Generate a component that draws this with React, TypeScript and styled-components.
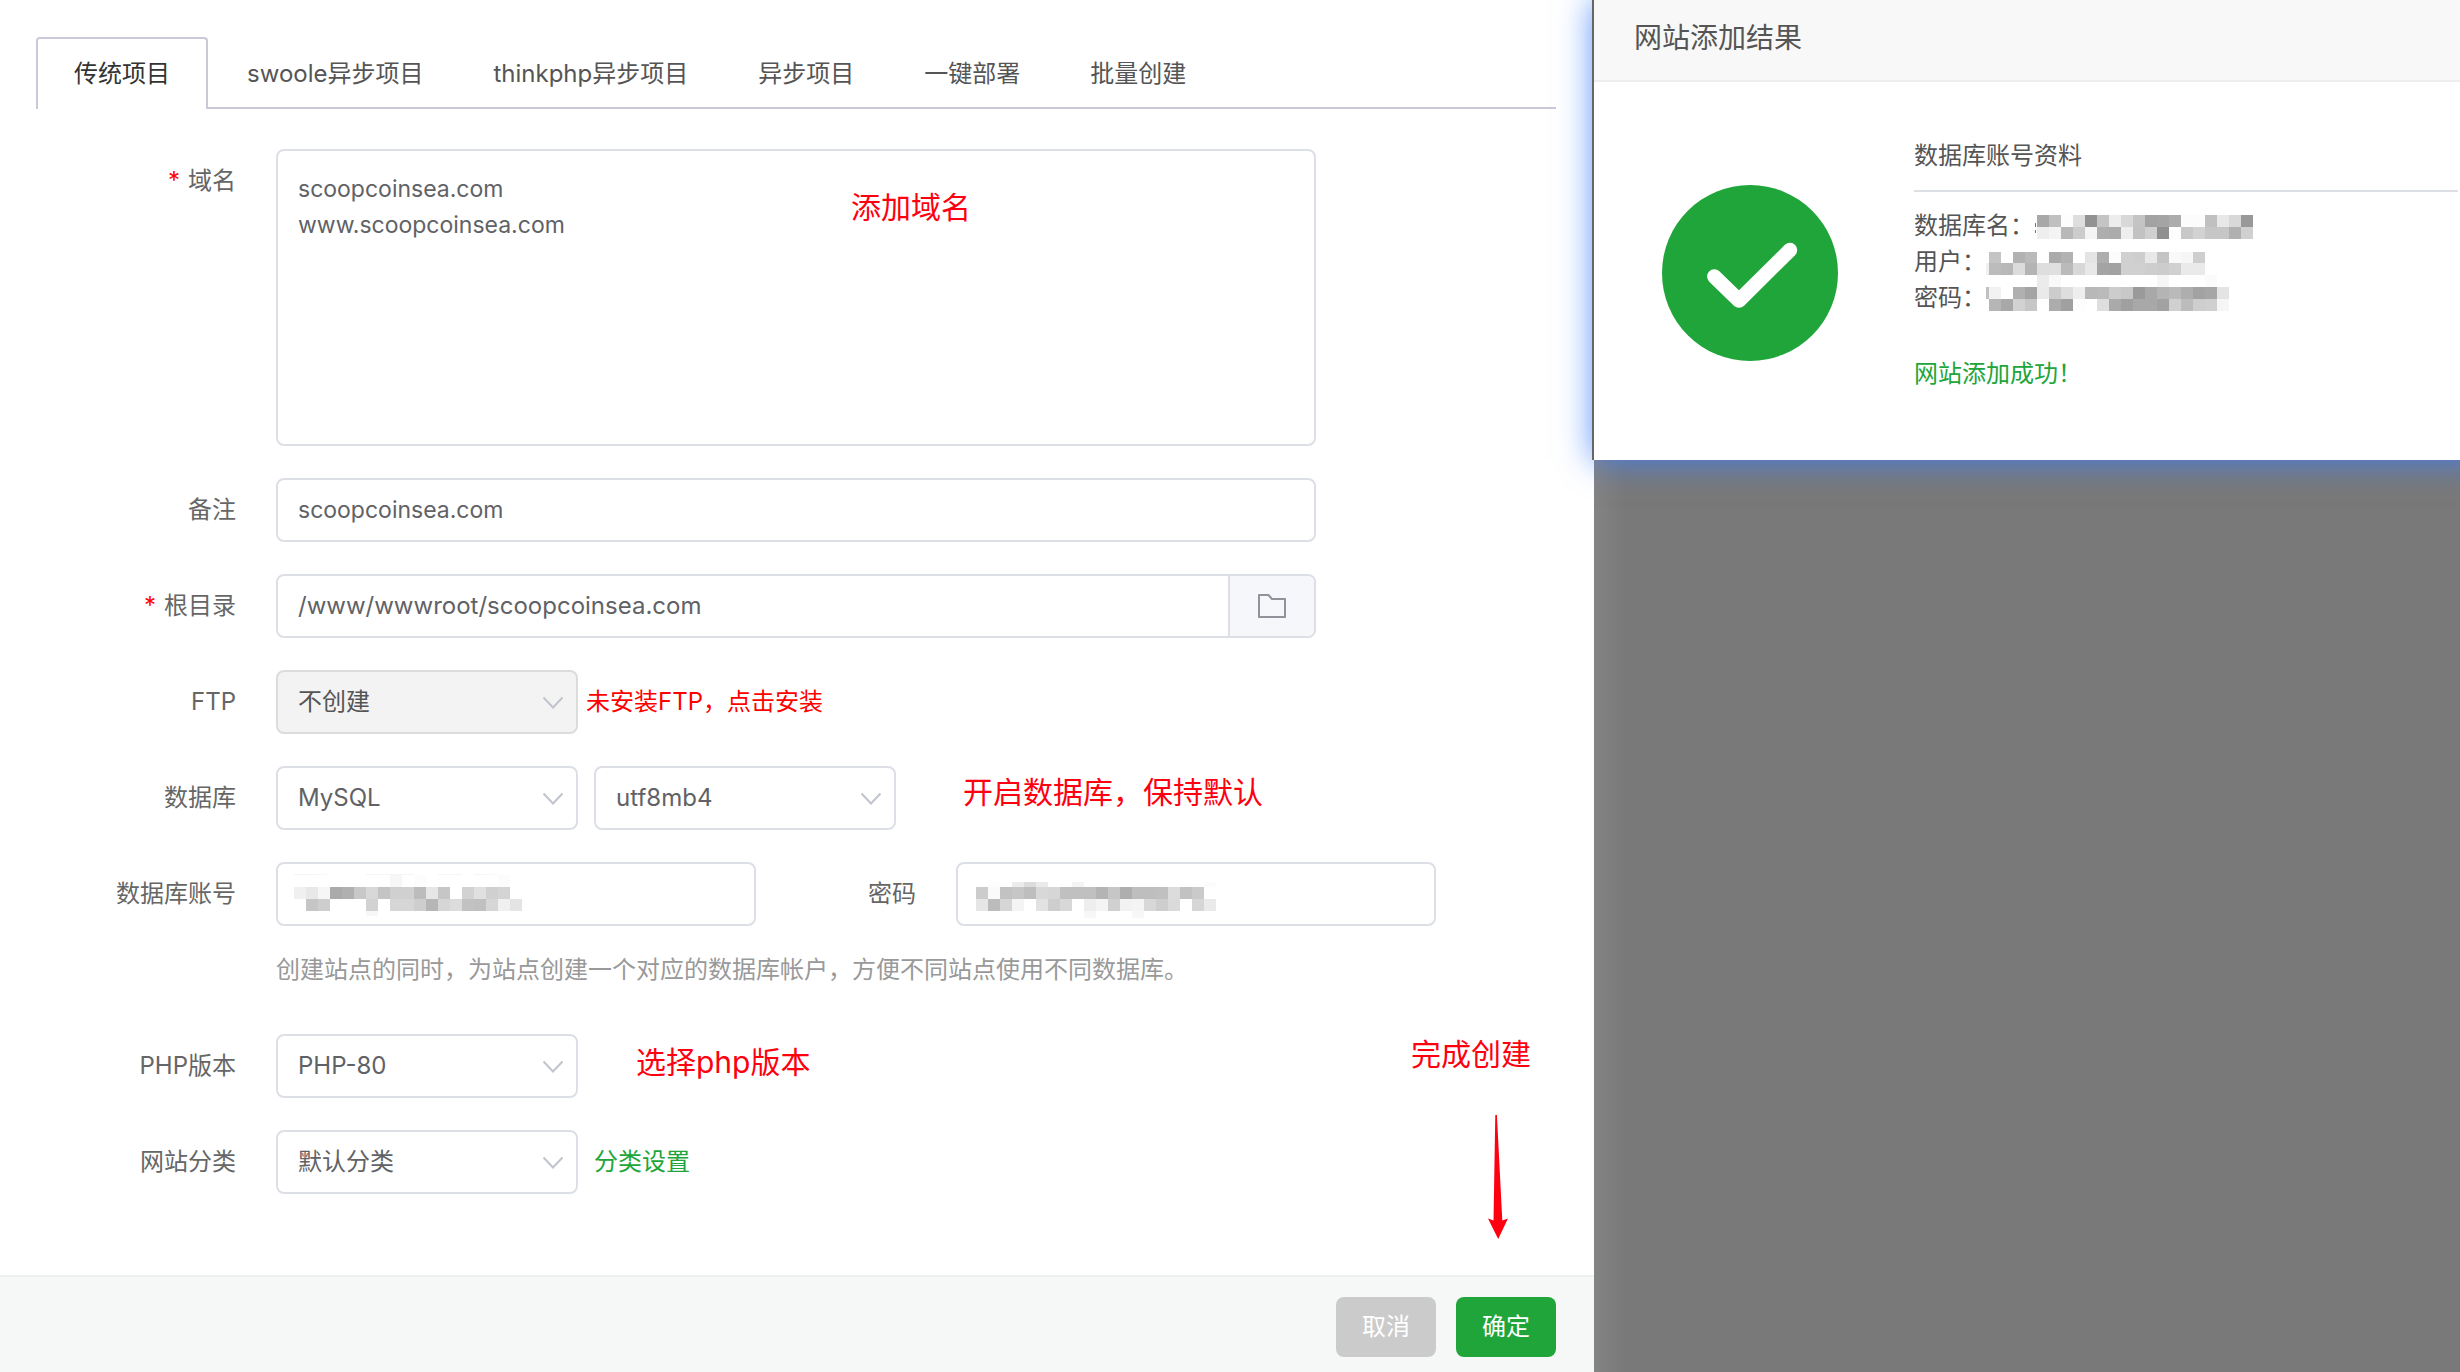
import React from "react";
import styled, { createGlobalStyle, css } from "styled-components";

const green = "#20a53a";
const line = "#dcdfe6";
const textColor = "#606266";
const sans = `Inter, "Noto Sans CJK SC", sans-serif`;

const GlobalStyle = createGlobalStyle`
  *, *::before, *::after { box-sizing: border-box; }
  body {
    margin: 0;
    background: #fff;
    color: #666;
    font-family: ${sans};
    font-size: 24px;
    line-height: 36px;
  }
  button, input, select, textarea { font: inherit; margin: 0; }
`;

const Page = styled.main`
  display: grid;
  grid-template-columns: minmax(0, 1594fr) minmax(0, 866fr);
  min-height: 100vh;
  overflow: hidden;
`;

const Panel = styled.section`
  position: relative;
  display: flex;
  flex-direction: column;
  background: #fff;
`;

const Tabs = styled.div`
  display: flex;
  margin: 37px 38px 0 36px;
  height: 72px;
  border-bottom: 2px solid #cbc8da;
`;

const Tab = styled.button<{ $active?: boolean }>`
  height: 70px;
  padding: 3px 35px 0;
  border: 0;
  background: none;
  color: #555;
  cursor: pointer;
  ${(p) =>
    p.$active &&
    css`
      height: 72px;
      margin-right: 4px;
      padding: 0 36px;
      border: 2px solid #cbc8da;
      border-bottom: 0;
      border-radius: 4px 4px 0 0;
      background: #fff;
      color: #333;
    `}
`;

const Form = styled.form`
  display: flex;
  flex-direction: column;
  gap: 32px;
  padding: 40px 36px 0;
`;

const Row = styled.div`
  display: grid;
  grid-template-columns: 200px minmax(0, 1fr);
  column-gap: 40px;
`;

const Label = styled.label`
  line-height: 64px;
  text-align: right;
  color: #666;
`;

const PasswordLabel = styled(Label)`
  width: 160px;
  margin-right: 40px;
`;

const Required = styled.span`
  margin-right: 8px;
  color: #f00;
`;

const Line = styled.div`
  display: flex;
  align-items: center;
`;

const field = css`
  border: 2px solid ${line};
  border-radius: 8px;
  background: #fff;
  color: ${textColor};
  outline: none;
`;

const TextArea = styled.textarea`
  ${field}
  display: block;
  width: 100%;
  max-width: 1040px;
  height: 297px;
  padding: 20px;
  font-size: 23px;
  resize: none;
`;

const Input = styled.input`
  ${field}
  width: 100%;
  max-width: 1040px;
  height: 64px;
  padding: 0 20px;
  font-size: 23px;
`;

const PathGroup = styled.div`
  ${field}
  display: flex;
  max-width: 1040px;
  height: 64px;
  overflow: hidden;
`;

const PathInput = styled.input`
  flex: 1;
  min-width: 0;
  padding: 0 20px;
  border: 0;
  background: none;
  color: inherit;
  outline: none;
`;

const FolderButton = styled.button`
  display: grid;
  place-items: center;
  width: 86px;
  padding: 0;
  border: 0;
  border-left: 2px solid ${line};
  background: #f5f7fa;
  cursor: pointer;
`;

const SelectBox = styled.div`
  position: relative;
  width: 302px;
  margin-right: 16px;
`;

const Select = styled.select`
  ${field}
  appearance: none;
  width: 100%;
  height: 64px;
  padding: 0 48px 0 20px;
  opacity: 1;
  &:disabled {
    border-color: #dcdcdc;
    background: #f3f3f3;
    color: #555;
  }
`;

const Chevron = styled.svg`
  position: absolute;
  top: 26px;
  right: 15px;
  pointer-events: none;
`;

const Warning = styled.a`
  margin-left: -8px;
  color: #f00;
  text-decoration: none;
`;

const GreenLink = styled.a`
  color: ${green};
  text-decoration: none;
`;

const MaskedField = styled.div`
  position: relative;
  width: 480px;
`;

const FieldMask = styled.div`
  position: absolute;
  top: 12px;
  left: 18px;
  line-height: 0;
  pointer-events: none;
`;

const Help = styled.p`
  margin: 26px 0 14px;
  color: #999;
`;

const Footer = styled.footer`
  display: flex;
  justify-content: flex-end;
  gap: 20px;
  margin-top: auto;
  padding: 20px 38px 15px;
  border-top: 2px solid #edf1f2;
  background: #f6f8f8;
`;

const ActionButton = styled.button<{ $primary?: boolean }>`
  width: 100px;
  height: 60px;
  padding: 0;
  border: 0;
  border-radius: 8px;
  background: ${(p) => (p.$primary ? green : "#cbcbcb")};
  color: #fff;
  cursor: pointer;
`;

const Note = styled.span<{ $x: number; $y: number }>`
  position: absolute;
  left: ${(p) => p.$x}px;
  top: ${(p) => p.$y}px;
  color: #ff0010;
  font-size: 30px;
  line-height: 40px;
  white-space: nowrap;
  pointer-events: none;
`;

const Arrow = styled.svg`
  position: absolute;
  left: 1488px;
  top: 1115px;
  pointer-events: none;
`;

const Backdrop = styled.div`
  min-width: 0;
  background: linear-gradient(to right, #848484, #797979 30px);
`;

/* The dialog runs past the right edge of the window, so its glow does too. */
const Dialog = styled.section`
  position: relative;
  min-height: 460px;
  margin-right: -32px;
  background: #fff;
  box-shadow: -2px 0 0 #666, 0 0 32px rgba(59, 125, 255, 0.9);
`;

const DialogTitle = styled.h2`
  height: 82px;
  margin: 0;
  padding: 0 40px;
  border-bottom: 2px solid #eee;
  background: #f8f8f8;
  color: #555;
  font-size: 28px;
  font-weight: 400;
  line-height: 76px;
`;

const Result = styled.div`
  display: grid;
  grid-template-columns: 176px minmax(0, 1fr);
  column-gap: 76px;
  padding: 56px 34px 0 68px;
`;

const Tick = styled.svg`
  margin-top: 47px;
`;

const ResultTitle = styled.h3`
  height: 54px;
  margin: 0 0 16px;
  border-bottom: 2px solid ${line};
  color: #555;
  font-size: 24px;
  font-weight: 400;
  line-height: 36px;
`;

const Detail = styled.div`
  display: flex;
  height: 36px;
  color: #555;
  white-space: nowrap;
  svg {
    margin-top: -1px;
  }
`;

const Success = styled.p`
  margin: 40px 0 0;
  color: ${green};
`;

type Band = { y: number; h: number; x?: number; cells: string };

const nameBands: Band[] = [
  { y: 8, h: 12, x: 3, cells: "a8 c0 fd de 92 c4 ed d8 c4 a2 a4 ac fc fc c0 e8 d8 98" },
  { y: 20, h: 12, x: 3, cells: "ee f4 b8 cc f4 ae ac ee c2 d0 90 fe c8 d2 c6 c6 b0 d0" },
];
const userBands: Band[] = [
  { y: 9, h: 11, x: 3, cells: "c4 -- b2 ba -- aa b2 -- e4 ae fc d0 ce e8 c4 f9 f6 ce" },
  { y: 20, h: 12, x: 3, cells: "bc b8 dc b4 de e0 ba d8 e8 a4 a2 d0 d0 ce cc d0 ea ea" },
  { y: 32, h: 4, x: 3, cells: "-- -- -- -- eb f9 -- -- -- -- -- -- -- -- f6 -- -- -- fb" },
];
const passBands: Band[] = [
  { y: 0, h: 8, x: 3, cells: "-- -- -- -- eb f9 -- -- -- -- -- -- -- -- f6 -- -- -- fb" },
  { y: 8, h: 12, x: 3, cells: "f2 -- b0 a4 ea cc de ee b8 ba cc c8 9a a8 b4 ba ae a2 a6 e4" },
  { y: 20, h: 12, x: 3, cells: "b6 a8 d2 c6 -- ac a0 fd -- de aa a0 a8 a8 a2 d0 bc ce d0 f6" },
];
const accountBands: Band[] = [
  { y: 0, h: 1, cells: "f4 f4 f9 -- -- -- f5 f5 f5 f5 -- -- f6 f6 -- f6 f9" },
  { y: 1, h: 12, cells: "-- -- -- -- -- -- -- -- f7 -- fc -- -- -- -- -- -- fc" },
  { y: 13, h: 12, cells: "f0 e8 f6 aa b0 c8 d8 c4 d0 d0 bc e6 c6 -- d2 e0 d0 d4" },
  { y: 25, h: 12, cells: "-- c6 ce -- -- -- d2 -- d6 d6 ce b6 d6 dc c2 c0 d6 f0 e4" },
  { y: 37, h: 5, cells: "-- -- -- -- -- -- f7" },
];
const secretBands: Band[] = [
  { y: 8, h: 5, x: 2, cells: "-- fd -- ec dc ea -- -- f4 -- -- -- -- -- -- -- -- -- -- fc" },
  { y: 13, h: 12, x: 2, cells: "cc fa c2 c6 be d8 d6 c0 c0 c0 b4 c6 ae be be c0 dc c2 ca" },
  { y: 25, h: 12, x: 2, cells: "e6 bc d6 f4 -- e2 ce d8 -- ee f4 d0 f2 f4 d8 ce da -- d6 ea" },
  { y: 37, h: 7, x: 2, cells: "-- -- -- -- -- -- -- -- -- f7 -- -- -- f7" },
];

function Mosaic({ bands, height, children }: { bands: Band[]; height: number; children?: React.ReactNode }) {
  return (
    <svg width="246" height={height} shapeRendering="crispEdges" aria-hidden="true">
      {bands.map((band) =>
        band.cells.split(" ").map((v, i) =>
          v === "--" ? null : (
            <rect
              key={`${band.y}-${i}`}
              x={(band.x ?? 0) + i * 12}
              y={band.y}
              width="12"
              height={band.h}
              fill={`#${v}${v}${v}`}
            />
          )
        )
      )}
      {children}
    </svg>
  );
}

function Dropdown({ id, value, disabled, label }: { id: string; value: string; disabled?: boolean; label?: string }) {
  return (
    <SelectBox>
      <Select id={id} defaultValue={value} disabled={disabled} aria-label={label}>
        <option>{value}</option>
      </Select>
      <Chevron width="20" height="14" viewBox="0 0 20 14" fill="none" stroke="#c0c4cc" strokeWidth="2">
        <path d="M0.5 1.5 10 11.5 19.5 1.5" />
      </Chevron>
    </SelectBox>
  );
}

const tabs = ["传统项目", "swoole异步项目", "thinkphp异步项目", "异步项目", "一键部署", "批量创建"];

export default function App() {
  return (
    <>
      <GlobalStyle />
      <Page>
        <Panel>
          <Tabs role="tablist">
            {tabs.map((name, i) => (
              <Tab key={name} type="button" role="tab" aria-selected={i === 0} $active={i === 0}>
                {name}
              </Tab>
            ))}
          </Tabs>
          <Form id="site-form" onSubmit={(e) => e.preventDefault()}>
            <Row>
              <Label htmlFor="domain">
                <Required>*</Required>域名
              </Label>
              <TextArea id="domain" spellCheck={false} defaultValue={"scoopcoinsea.com\nwww.scoopcoinsea.com"} />
            </Row>
            <Row>
              <Label htmlFor="remark">备注</Label>
              <Input id="remark" defaultValue="scoopcoinsea.com" />
            </Row>
            <Row>
              <Label htmlFor="root-path">
                <Required>*</Required>根目录
              </Label>
              <PathGroup>
                <PathInput id="root-path" defaultValue="/www/wwwroot/scoopcoinsea.com" />
                <FolderButton type="button" aria-label="选择目录">
                  <svg width="28" height="24" viewBox="0 0 28 24" fill="none" stroke="#909399" strokeWidth="2">
                    <path d="M1 1H10.500L14 5H27V23H1Z" strokeLinejoin="round" />
                  </svg>
                </FolderButton>
              </PathGroup>
            </Row>
            <Row>
              <Label htmlFor="ftp">FTP</Label>
              <Line>
                <Dropdown id="ftp" value="不创建" disabled />
                <Warning href="#install-ftp">未安装FTP，点击安装</Warning>
              </Line>
            </Row>
            <Row>
              <Label htmlFor="database">数据库</Label>
              <Line>
                <Dropdown id="database" value="MySQL" />
                <Dropdown id="charset" value="utf8mb4" label="字符集" />
              </Line>
            </Row>
            <Row>
              <Label htmlFor="db-user">数据库账号</Label>
              <div>
                <Line>
                  <MaskedField>
                    <Input id="db-user" />
                    <FieldMask>
                      <Mosaic bands={accountBands} height={44} />
                    </FieldMask>
                  </MaskedField>
                  <PasswordLabel htmlFor="db-password">密码</PasswordLabel>
                  <MaskedField>
                    <Input id="db-password" />
                    <FieldMask>
                      <Mosaic bands={secretBands} height={44} />
                    </FieldMask>
                  </MaskedField>
                </Line>
                <Help>创建站点的同时，为站点创建一个对应的数据库帐户，方便不同站点使用不同数据库。</Help>
              </div>
            </Row>
            <Row>
              <Label htmlFor="php">PHP版本</Label>
              <Line>
                <Dropdown id="php" value="PHP-80" />
              </Line>
            </Row>
            <Row>
              <Label htmlFor="category">网站分类</Label>
              <Line>
                <Dropdown id="category" value="默认分类" />
                <GreenLink href="#category-settings">分类设置</GreenLink>
              </Line>
            </Row>
          </Form>
          <Footer>
            <ActionButton type="button">取消</ActionButton>
            <ActionButton type="submit" form="site-form" $primary>
              确定
            </ActionButton>
          </Footer>

          <Note $x={851} $y={187}>添加域名</Note>
          <Note $x={963} $y={772}>开启数据库，保持默认</Note>
          <Note $x={636} $y={1042}>选择php版本</Note>
          <Note $x={1411} $y={1034}>完成创建</Note>
          <Arrow width="20" height="124" viewBox="0 0 20 124" fill="#ff0010" aria-hidden="true">
            <path d="M7.300 0H8.900L14.300 105.500 20 103.500 10.200 124 0 103.500 5.500 105.500Z" />
          </Arrow>
        </Panel>

        <Backdrop>
          <Dialog role="dialog" aria-labelledby="result-title">
            <DialogTitle id="result-title">网站添加结果</DialogTitle>
            <Result>
              <Tick width="176" height="176" viewBox="0 0 176 176" aria-hidden="true">
                <circle cx="88" cy="88" r="88" fill={green} />
                <path
                  d="M52.300 91.500 77 115.500 128 65"
                  fill="none"
                  stroke="#fff"
                  strokeWidth="14.500"
                  strokeLinecap="round"
                  strokeLinejoin="round"
                />
              </Tick>
              <div>
                <ResultTitle>数据库账号资料</ResultTitle>
                <Detail>
                  数据库名：
                  <Mosaic bands={nameBands} height={36}>
                    <rect x="1" y="16" width="1" height="4" fill="#777" />
                    <rect x="1" y="23" width="1" height="3" fill="#777" />
                  </Mosaic>
                </Detail>
                <Detail>
                  用户：
                  <Mosaic bands={userBands} height={36}>
                    <rect x="0" y="20" width="3" height="12" fill="#f0f0f0" />
                  </Mosaic>
                </Detail>
                <Detail>
                  密码：
                  <Mosaic bands={passBands} height={36}>
                    <rect x="0" y="8" width="3" height="12" fill="#c0c0c0" />
                  </Mosaic>
                </Detail>
                <Success>网站添加成功！</Success>
              </div>
            </Result>
          </Dialog>
        </Backdrop>
      </Page>
    </>
  );
}
